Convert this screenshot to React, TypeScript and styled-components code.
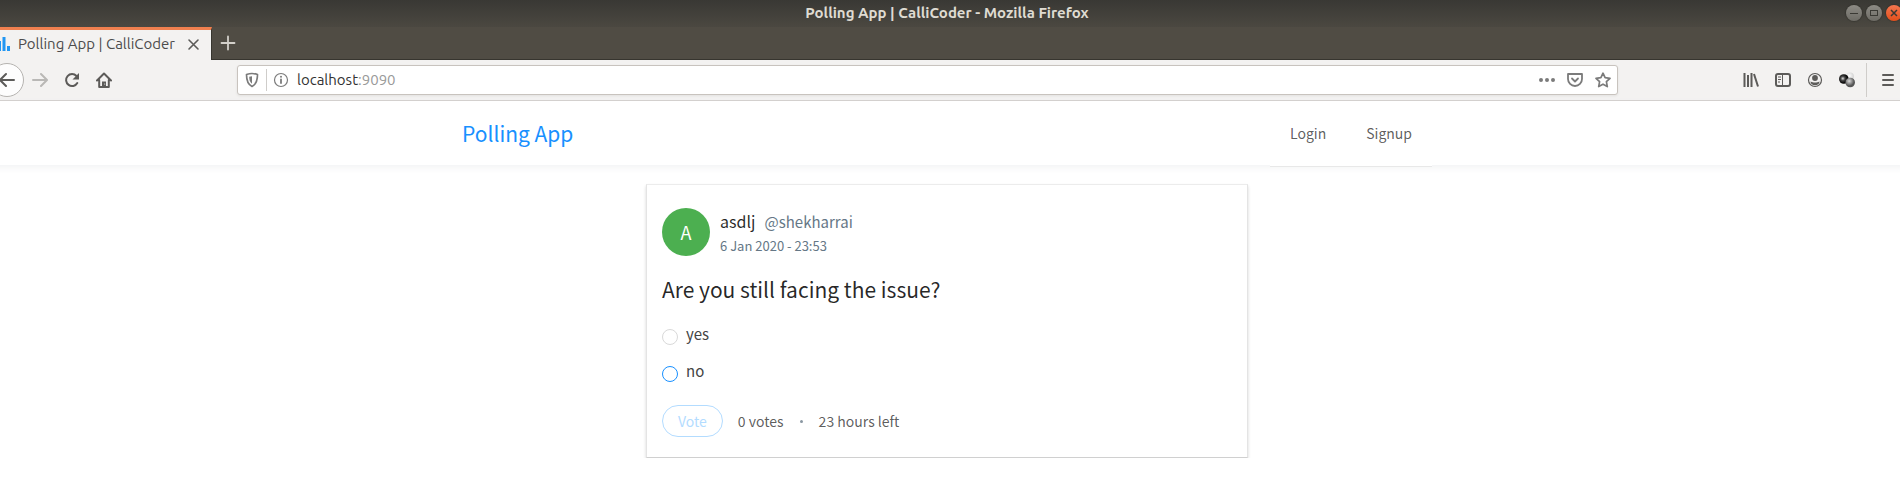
import React from 'react';
import styled, { createGlobalStyle } from 'styled-components';

const uiFont = `'Ubuntu', 'Noto Sans', sans-serif`;
const pageFont = `'Noto Sans CJK SC', 'Source Sans Pro', sans-serif`;

const GlobalStyle = createGlobalStyle`
  *, *::before, *::after { box-sizing: border-box; }
  body { margin: 0; background: #fff; overflow: hidden; }
  button, input { font: inherit; margin: 0; }
  svg { display: block; }
`;

const Window = styled.div`
  margin: 0 -7px 0 -13px;
  font-family: ${uiFont};
`;

const TitleBar = styled.header`
  display: grid;
  grid-template-columns: 1fr auto 1fr;
  align-items: center;
  height: 27px;
  padding-bottom: 2px;
  background: linear-gradient(#393834, #4b4841);
`;

const WindowTitle = styled.span`
  grid-column: 2;
  font-size: 15px;
  font-weight: 700;
  line-height: 24px;
  color: #dfdbd2;
`;

const WindowControls = styled.div`
  display: flex;
  justify-content: flex-end;
  gap: 4px;
  padding-right: 5px;
`;

const ControlButton = styled.button<{ $close?: boolean }>`
  display: grid;
  place-items: center;
  width: 16px;
  height: 16px;
  padding: 0;
  border: 0;
  border-radius: 50%;
  color: #3a3934;
  background: ${p => (p.$close ? 'linear-gradient(#f4764f, #e24f1b)' : 'linear-gradient(#8d8b85, #6d6b65)')};
  box-shadow: 0 0 1px 1px rgba(40, 39, 35, 0.4);
`;

const TabStrip = styled.div`
  display: flex;
  height: 33px;
  background: #504c44;
  border-bottom: 1px solid #37352f;
`;

const Tab = styled.div`
  display: flex;
  align-items: center;
  width: 225px;
  height: 33px;
  padding: 0 10px 2px 9px;
  gap: 8px;
  background: #f3f2f1;
  border-top: 3px solid #f0804f;
  border-right: 1px solid #37352f;
  color: #4c4c4c;
`;

const TabTitle = styled.span`
  flex: 1;
  font-size: 15px;
  line-height: 20px;
  white-space: nowrap;
`;

const IconButton = styled.button<{ $size?: number }>`
  display: grid;
  place-items: center;
  flex: none;
  width: ${p => p.$size ?? 32}px;
  height: ${p => p.$size ?? 32}px;
  padding: 0;
  border: 0;
  background: none;
  color: #5c5b59;
  &:disabled { color: #b9b8b6; }
`;

const NewTab = styled(IconButton)`
  color: #d3d0ca;
`;

const BackButton = styled(IconButton)`
  border: 1px solid #b5b3b0;
  border-radius: 50%;
  background: #fdfdfd;
`;

const Toolbar = styled.nav`
  display: flex;
  align-items: center;
  height: 41px;
  padding: 0 3px;
  background: #f3f2f1;
  border-bottom: 1px solid #c8c4c0;
`;

const NavButtons = styled.div`
  display: flex;
  align-items: center;
  width: 247px;
`;

const UrlBar = styled.div`
  display: flex;
  align-items: center;
  flex: 1;
  height: 30px;
  background: #fff;
  border: 1px solid #c8c3be;
  border-radius: 3px;
  box-shadow: 0 1px 3px rgba(0, 0, 0, 0.07);
`;

const UrlButton = styled(IconButton)`
  width: 28px;
  height: 28px;
  color: #7b7b7b;
`;

const Divider = styled.span<{ $tall?: boolean }>`
  width: 1px;
  height: ${p => (p.$tall ? 34 : 22)}px;
  margin-left: ${p => (p.$tall ? 3 : 0)}px;
  background: #cfcdca;
`;

const Address = styled.span`
  flex: 1;
  padding-left: 2px;
  font-size: 15px;
  line-height: 20px;
  color: #333;
`;

const Port = styled.span`
  color: #999;
`;

const ToolButtons = styled.div`
  display: flex;
  align-items: center;
  margin-left: 117px;
`;

const MenuButton = styled(IconButton)`
  margin-left: 5px;
`;

const Page = styled.div`
  font-family: ${pageFont};
  font-size: 14px;
  color: rgba(0, 0, 0, 0.65);
`;

const AppHeader = styled.header`
  height: 64px;
  background: #fff;
  box-shadow: 0 2px 8px #f0f1f2;
`;

const HeaderInner = styled.div`
  display: flex;
  justify-content: space-between;
  max-width: 970px;
  margin: 0 auto;
`;

const Brand = styled.a`
  font-size: 21px;
  line-height: 64px;
  color: #1890ff;
  text-decoration: none;
`;

const Menu = styled.nav`
  display: flex;
  height: 66px;
  background: #fff;
  border-bottom: 1px solid #e8e8e8;
`;

const MenuLink = styled.a`
  padding: 0 20px;
  line-height: 64px;
  color: rgba(0, 0, 0, 0.65);
  text-decoration: none;
`;

const Poll = styled.form`
  max-width: 602px;
  margin: 19px auto 0;
  padding: 23px 15px 20px;
  background: #fff;
  border: 1px solid #e4e4e4;
  border-top-color: #ececec;
  border-bottom-color: #d0d0d0;
  box-shadow: 0 2px 3px rgba(0, 0, 0, 0.16);
`;

const Creator = styled.div`
  display: flex;
  gap: 10px;
`;

const Avatar = styled.span`
  width: 48px;
  border-radius: 50%;
  background: #4caf50;
  color: #fff;
  font-size: 18px;
  line-height: 48px;
  text-align: center;
`;

const CreatorName = styled.div`
  display: flex;
  gap: 9px;
  font-size: 16px;
  line-height: 27px;
  color: rgba(0, 0, 0, 0.85);
`;

const Username = styled.span`
  font-size: 15px;
  color: #657786;
`;

const PollDate = styled.div`
  font-size: 13px;
  line-height: 21px;
  color: #657786;
`;

const Question = styled.h1`
  margin: 17px 0;
  font-size: 21px;
  font-weight: 400;
  line-height: 32px;
  color: rgba(0, 0, 0, 0.85);
`;

const Choice = styled.label`
  display: flex;
  gap: 8px;
  height: 37px;
  font-size: 15px;
  line-height: 24px;
  color: #444;
`;

const Radio = styled.input`
  appearance: none;
  width: 16px;
  height: 16px;
  margin-top: 7px;
  border: 1px solid #d9d9d9;
  border-radius: 50%;
  background: #fff;
  &[value='no'] { border-color: #1890ff; }
`;

const Footer = styled.div`
  display: flex;
  align-items: center;
  margin-top: 9px;
  gap: 15px;
`;

const VoteButton = styled.button`
  height: 32px;
  padding: 0 15px;
  border: 1px solid #b3dcff;
  border-radius: 16px;
  background: #fff;
  color: #b3dcff;
  line-height: 30px;
`;

const Dot = styled.span`
  width: 3px;
  height: 3px;
  margin: 0 1px;
  border-radius: 50%;
  background: #8a97a2;
`;

const line = { fill: 'none', stroke: 'currentColor', strokeWidth: 2, strokeLinecap: 'round', strokeLinejoin: 'round' } as const;

const Icon = ({ children }: { children: React.ReactNode }) => (
  <svg width="16" height="16" viewBox="0 0 16 16" aria-hidden="true">{children}</svg>
);

export default function App() {
  return (
    <>
      <GlobalStyle />
      <Window>
        <TitleBar>
          <WindowTitle>Polling App | CalliCoder - Mozilla Firefox</WindowTitle>
          <WindowControls>
            <ControlButton aria-label="Minimize"><Icon><path d="M4 8.500h8" stroke="currentColor" /></Icon></ControlButton>
            <ControlButton aria-label="Maximize"><Icon><rect x="4.500" y="5.500" width="7" height="5" fill="none" stroke="currentColor" /></Icon></ControlButton>
            <ControlButton $close aria-label="Close"><Icon><path d="M5 5l6 6M11 5l-6 6" stroke="currentColor" strokeWidth="1.500" /></Icon></ControlButton>
          </WindowControls>
        </TitleBar>
        <TabStrip>
          <Tab>
            <svg width="14" height="14" viewBox="0 0 14 14" aria-hidden="true">
              <path d="M2 4h3v10H2zM6.500 0h3v14h-3zM11 9h3v5h-3z" fill="#2196f3" />
            </svg>
            <TabTitle>Polling App | CalliCoder</TabTitle>
            <IconButton $size={16} aria-label="Close tab"><Icon><path d="M4 4l9 9M13 4l-9 9" {...line} strokeWidth={1.6} /></Icon></IconButton>
          </Tab>
          <NewTab aria-label="New tab"><Icon><path d="M8 1.500v13M1.500 8h13" {...line} strokeWidth={1.8} /></Icon></NewTab>
        </TabStrip>
        <Toolbar>
          <NavButtons>
            <BackButton $size={34} aria-label="Back"><Icon><path d="M15 8H1.500M7 2L1 8l6 6" {...line} /></Icon></BackButton>
            <IconButton disabled aria-label="Forward"><Icon><path d="M1 8h13.500M9 2l6 6-6 6" {...line} /></Icon></IconButton>
            <IconButton aria-label="Reload">
              <Icon><path d="M13.300 11A6 6 0 1 1 12.500 4" {...line} /><path d="M15 1v6.500H8.500z" fill="currentColor" /></Icon>
            </IconButton>
            <IconButton aria-label="Home">
              <Icon>
                <path d="M1 8.500L8 1.500l7 7M3.200 8v7h9.600V8" {...line} />
                <path d="M6 15V9.500h4V15z" fill="currentColor" />
                <circle cx="8.700" cy="12" r=".6" fill="#f3f2f1" />
              </Icon>
            </IconButton>
          </NavButtons>
          <UrlBar>
            <UrlButton aria-label="Tracking protection">
              <Icon>
                <path d="M8 1.500c2 0 4 .5 5.500 1 0 5-.5 9.500-5.500 12-5-2.500-5.500-7-5.500-12 1.500-.5 3.500-1 5.500-1z" {...line} strokeWidth={1.700} />
                <path d="M8 4.200v7.600C5.600 10 5.300 7.500 5.200 4.700z" fill="currentColor" />
              </Icon>
            </UrlButton>
            <Divider />
            <UrlButton aria-label="Site information">
              <Icon>
                <circle cx="8" cy="8" r="6.500" {...line} strokeWidth={1.200} />
                <path d="M8 7.500V11" {...line} strokeWidth={1.800} />
                <circle cx="8" cy="4.800" r="1" fill="currentColor" />
              </Icon>
            </UrlButton>
            <Address>localhost<Port>:9090</Port></Address>
            <UrlButton aria-label="Page actions">
              <Icon><path d="M0 8a2 2 0 1 1 4 0a2 2 0 1 1-4 0M6 8a2 2 0 1 1 4 0a2 2 0 1 1-4 0M12 8a2 2 0 1 1 4 0a2 2 0 1 1-4 0" fill="currentColor" /></Icon>
            </UrlButton>
            <UrlButton aria-label="Save to Pocket">
              <Icon><path d="M1 2h14v5a7 7 0 0 1-14 0zM5 6.500l3 3 3-3" {...line} strokeWidth={1.800} /></Icon>
            </UrlButton>
            <UrlButton aria-label="Bookmark">
              <Icon><path d="M8 1.200l2.100 4.500 4.900.6-3.600 3.400.9 4.900L8 12.200l-4.300 2.400.9-4.900L1 6.300l4.900-.6z" {...line} strokeWidth={1.700} /></Icon>
            </UrlButton>
          </UrlBar>
          <ToolButtons>
            <IconButton aria-label="Library">
              <Icon><path d="M1.500 1v14M5 3v12M8.500 1v14M11 2l4 12.500" {...line} strokeLinecap="butt" /></Icon>
            </IconButton>
            <IconButton aria-label="Sidebars">
              <Icon>
                <rect x="1" y="2" width="14" height="12" rx="2" {...line} />
                <path d="M7.500 2v12" {...line} strokeWidth={1} />
                <path d="M3 5h3M3 7.500h3M3 10h2" {...line} strokeWidth={1} strokeLinecap="butt" />
              </Icon>
            </IconButton>
            <IconButton aria-label="Account">
              <Icon>
                <circle cx="8" cy="8" r="6.500" {...line} strokeWidth={1.200} />
                <circle cx="8" cy="6" r="2.900" fill="currentColor" />
                <path d="M3.500 9.500c2 .6 2.500 1 4.500 1s2.500-.4 4.500-1c0 2.500-2 3.800-4.500 3.800s-4.500-1.300-4.500-3.800z" fill="currentColor" />
              </Icon>
            </IconButton>
            <IconButton aria-label="Extension">
              <Icon>
                <defs>
                  <radialGradient id="ball-dark" cx=".4" cy=".45"><stop offset="0" stopColor="#ddd" /><stop offset=".45" stopColor="#444" /><stop offset="1" stopColor="#000" /></radialGradient>
                  <radialGradient id="ball-grey" cx=".4" cy=".35"><stop offset="0" stopColor="#ddd" /><stop offset="1" stopColor="#555" /></radialGradient>
                  <radialGradient id="ball-light" cx=".4" cy=".4"><stop offset="0" stopColor="#fff" /><stop offset="1" stopColor="#d8d8d8" /></radialGradient>
                </defs>
                <circle cx="11" cy="4.500" r="4" fill="url(#ball-light)" />
                <circle cx="4.800" cy="7" r="4.800" fill="url(#ball-dark)" />
                <circle cx="11.200" cy="10.500" r="4.800" fill="url(#ball-grey)" />
              </Icon>
            </IconButton>
            <Divider $tall />
            <MenuButton aria-label="Open menu"><Icon><path d="M3 3h10M3 8h10M3 13h10" {...line} /></Icon></MenuButton>
          </ToolButtons>
        </Toolbar>
        <Page>
          <AppHeader>
            <HeaderInner>
              <Brand href="#">Polling App</Brand>
              <Menu>
                <MenuLink href="#login">Login</MenuLink>
                <MenuLink href="#signup">Signup</MenuLink>
              </Menu>
            </HeaderInner>
          </AppHeader>
          <Poll>
            <Creator>
              <Avatar>A</Avatar>
              <div>
                <CreatorName>asdlj <Username>@shekharrai</Username></CreatorName>
                <PollDate>6 Jan 2020 - 23:53</PollDate>
              </div>
            </Creator>
            <Question>Are you still facing the issue?</Question>
            <Choice><Radio type="radio" name="choice" value="yes" />yes</Choice>
            <Choice><Radio type="radio" name="choice" value="no" />no</Choice>
            <Footer>
              <VoteButton type="button" disabled>Vote</VoteButton>
              <span>0 votes</span>
              <Dot />
              <span>23 hours left</span>
            </Footer>
          </Poll>
        </Page>
      </Window>
    </>
  );
}
